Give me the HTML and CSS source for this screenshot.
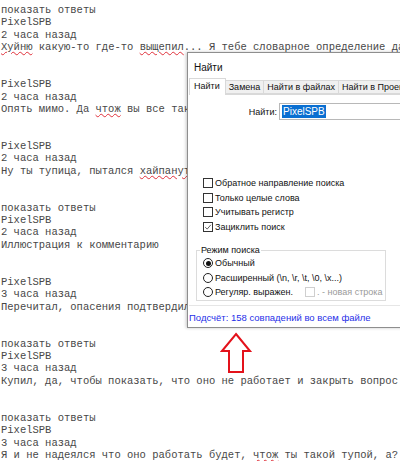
FILE: index.html
```html
<!DOCTYPE html>
<html lang="ru">
<head>
<meta charset="utf-8">
<title>Комментарии</title>
<link rel="stylesheet" href="styles.css">
</head>
<body>
<pre class="thread">показать ответы
PixelSPB
2 часа назад
<span class="sp">Хуйню</span> какую-то где-то <span class="sp">выщепил</span>... Я тебе словарное определение дал


PixelSPB
2 часа назад
Опять мимо. Да <span class="sp">чтож</span> вы все так тупы


PixelSPB
2 часа назад
Ну ты тупица, пытался <span class="sp">хайпануть</span>


показать ответы
PixelSPB
2 часа назад
Иллюстрация к комментарию


PixelSPB
3 часа назад
Перечитал, опасения подтвердились


показать ответы
PixelSPB
3 часа назад
Купил, да, чтобы показать, что оно не работает и закрыть вопрос


показать ответы
PixelSPB
3 часа назад
Я и не надеялся что оно работать будет, <span class="sp">чтож</span> ты такой тупой, а?</pre>

<div class="dlg">
  <div class="dlg-title">Найти</div>
  <div class="tabs">
    <div class="tab on">Найти</div>
    <div class="tab">Замена</div>
    <div class="tab">Найти в файлах</div>
    <div class="tab">Найти в Проектах</div>
  </div>
  <div class="panel">
    <div class="find-row">
      <span class="find-label">Найти:</span>
      <span class="find-input"><span class="sel">PixelSPB</span></span>
    </div>
    <div class="opts">
      <div class="opt"><span class="cb"></span>Обратное направление поиска</div>
      <div class="opt"><span class="cb"></span>Только целые слова</div>
      <div class="opt"><span class="cb"></span>Учитывать регистр</div>
      <div class="opt"><span class="cb"><svg viewBox="0 0 10 10" width="8" height="8"><path d="M1.5 5.2 L4 7.6 L8.6 2.2" fill="none" stroke="#222" stroke-width="0.9"/></svg></span>Зациклить поиск</div>
    </div>
    <fieldset class="mode">
      <legend>Режим поиска</legend>
      <div class="opt"><span class="rb on"></span>Обычный</div>
      <div class="opt"><span class="rb"></span>Расширенный (\n, \r, \t, \0, \x...)</div>
      <div class="opt"><span class="rb"></span>Регуляр. выражен.<span class="cb off"></span><span class="dim">. - новая строка</span></div>
    </fieldset>
  </div>
  <div class="status">Подсчёт: 158 совпадений во всем файле</div>
</div>

<svg class="arrow" width="34" height="44" viewBox="0 0 34 44">
  <polygon points="16,2 30,19 23,19 23,40 9,40 9,19 2,19" fill="none" stroke="#e3121b" stroke-width="2" stroke-linejoin="miter"/>
</svg>
</body>
</html>
```

FILE: styles.css
```css
html, body {
  margin: 0;
  padding: 0;
  width: 400px;
  height: 472px;
  overflow: hidden;
  background: #fff;
}

/* comment thread in plain monospace text */
.thread {
  margin: 0;
  padding: 4px 0 0 1px;
  font-family: "Liberation Mono", "Courier New", monospace;
  font-size: 10.5px;
  line-height: 12.36px;
  color: #474747;
  white-space: pre;
  overflow: hidden;
}

.sp {
  text-decoration: underline wavy #e0303a;
  text-decoration-thickness: 1px;
  text-underline-offset: 1px;
}

/* search window on top of the text */
.dlg {
  position: absolute;
  left: 187px;
  top: 52px;
  width: 240px;
  height: 276px;
  box-sizing: border-box;
  background: #fff;
  border: 1px solid #8e8e8e;
  box-shadow: -1px 0 3px rgba(0, 0, 0, 0.22);
  font-family: "Liberation Sans", Arial, sans-serif;
  font-size: 9px;
  color: #111;
  display: flex;
  flex-direction: column;
}

.dlg-title {
  height: 25px;
  box-sizing: border-box;
  padding: 3px 0 0 6px;
  display: flex;
  align-items: center;
  font-size: 10px;
}

.tabs {
  height: 16px;
  display: flex;
  align-items: flex-end;
  padding-left: 1px;
}

.tab {
  height: 14px;
  box-sizing: border-box;
  padding: 0 3px;
  line-height: 12px;
  background: #f0f0f0;
  border: 1px solid #d9d9d9;
  border-left: none;
  white-space: nowrap;
}

.tab.on {
  height: 17px;
  margin-bottom: -1px;
  padding: 1px 5px 0 4px;
  background: #fff;
  border-left: 1px solid #d9d9d9;
  border-bottom: none;
  position: relative;
  z-index: 1;
}

.panel {
  flex: 1;
  border-top: 1px solid #d9d9d9;
  border-bottom: 1px solid #e6e6e6;
  margin-left: 1px;
  display: flex;
  flex-direction: column;
}

.find-row {
  margin-top: 8px;
  display: flex;
  align-items: center;
  gap: 2px;
}

.find-label {
  width: 88px;
  text-align: right;
}

.find-input {
  flex: 1;
  height: 17px;
  box-sizing: border-box;
  border: 1px solid #b8b8b8;
  border-right: none;
  padding: 1px 2px;
  display: flex;
  align-items: center;
  font-size: 10px;
}

.sel {
  background: #0a6fd1;
  color: #fff;
  line-height: 13px;
  padding: 0 1px;
}

.opts {
  margin-top: 56px;
  padding-left: 14px;
}

.opt {
  height: 14.5px;
  display: flex;
  align-items: center;
  gap: 2px;
  white-space: nowrap;
}

.cb {
  width: 10px;
  height: 10px;
  box-sizing: border-box;
  border: 1px solid #333;
  background: #fff;
  display: flex;
  align-items: center;
  justify-content: center;
  flex: none;
}

.cb.off {
  border-color: #cfcfcf;
  margin-left: 10px;
}

.dim {
  color: #9a9a9a;
}

.rb {
  width: 10px;
  height: 10px;
  box-sizing: border-box;
  border: 1px solid #222;
  border-radius: 50%;
  background: #fff;
  display: flex;
  align-items: center;
  justify-content: center;
  flex: none;
}

.rb.on::after {
  content: "";
  width: 5px;
  height: 5px;
  border-radius: 50%;
  background: #111;
}

.mode {
  margin: 11px 40px 0 7px;
  padding: 1px 0 0 6px;
  border: 1px solid #dcdcdc;
}

.mode legend {
  padding: 0 1px;
  margin-left: -3px;
}

.status {
  height: 20px;
  display: flex;
  align-items: center;
  padding: 1px 0 0 1px;
  color: #1f2fe8;
  font-size: 9.5px;
  white-space: nowrap;
}

.arrow {
  position: absolute;
  left: 220px;
  top: 332px;
}
```
